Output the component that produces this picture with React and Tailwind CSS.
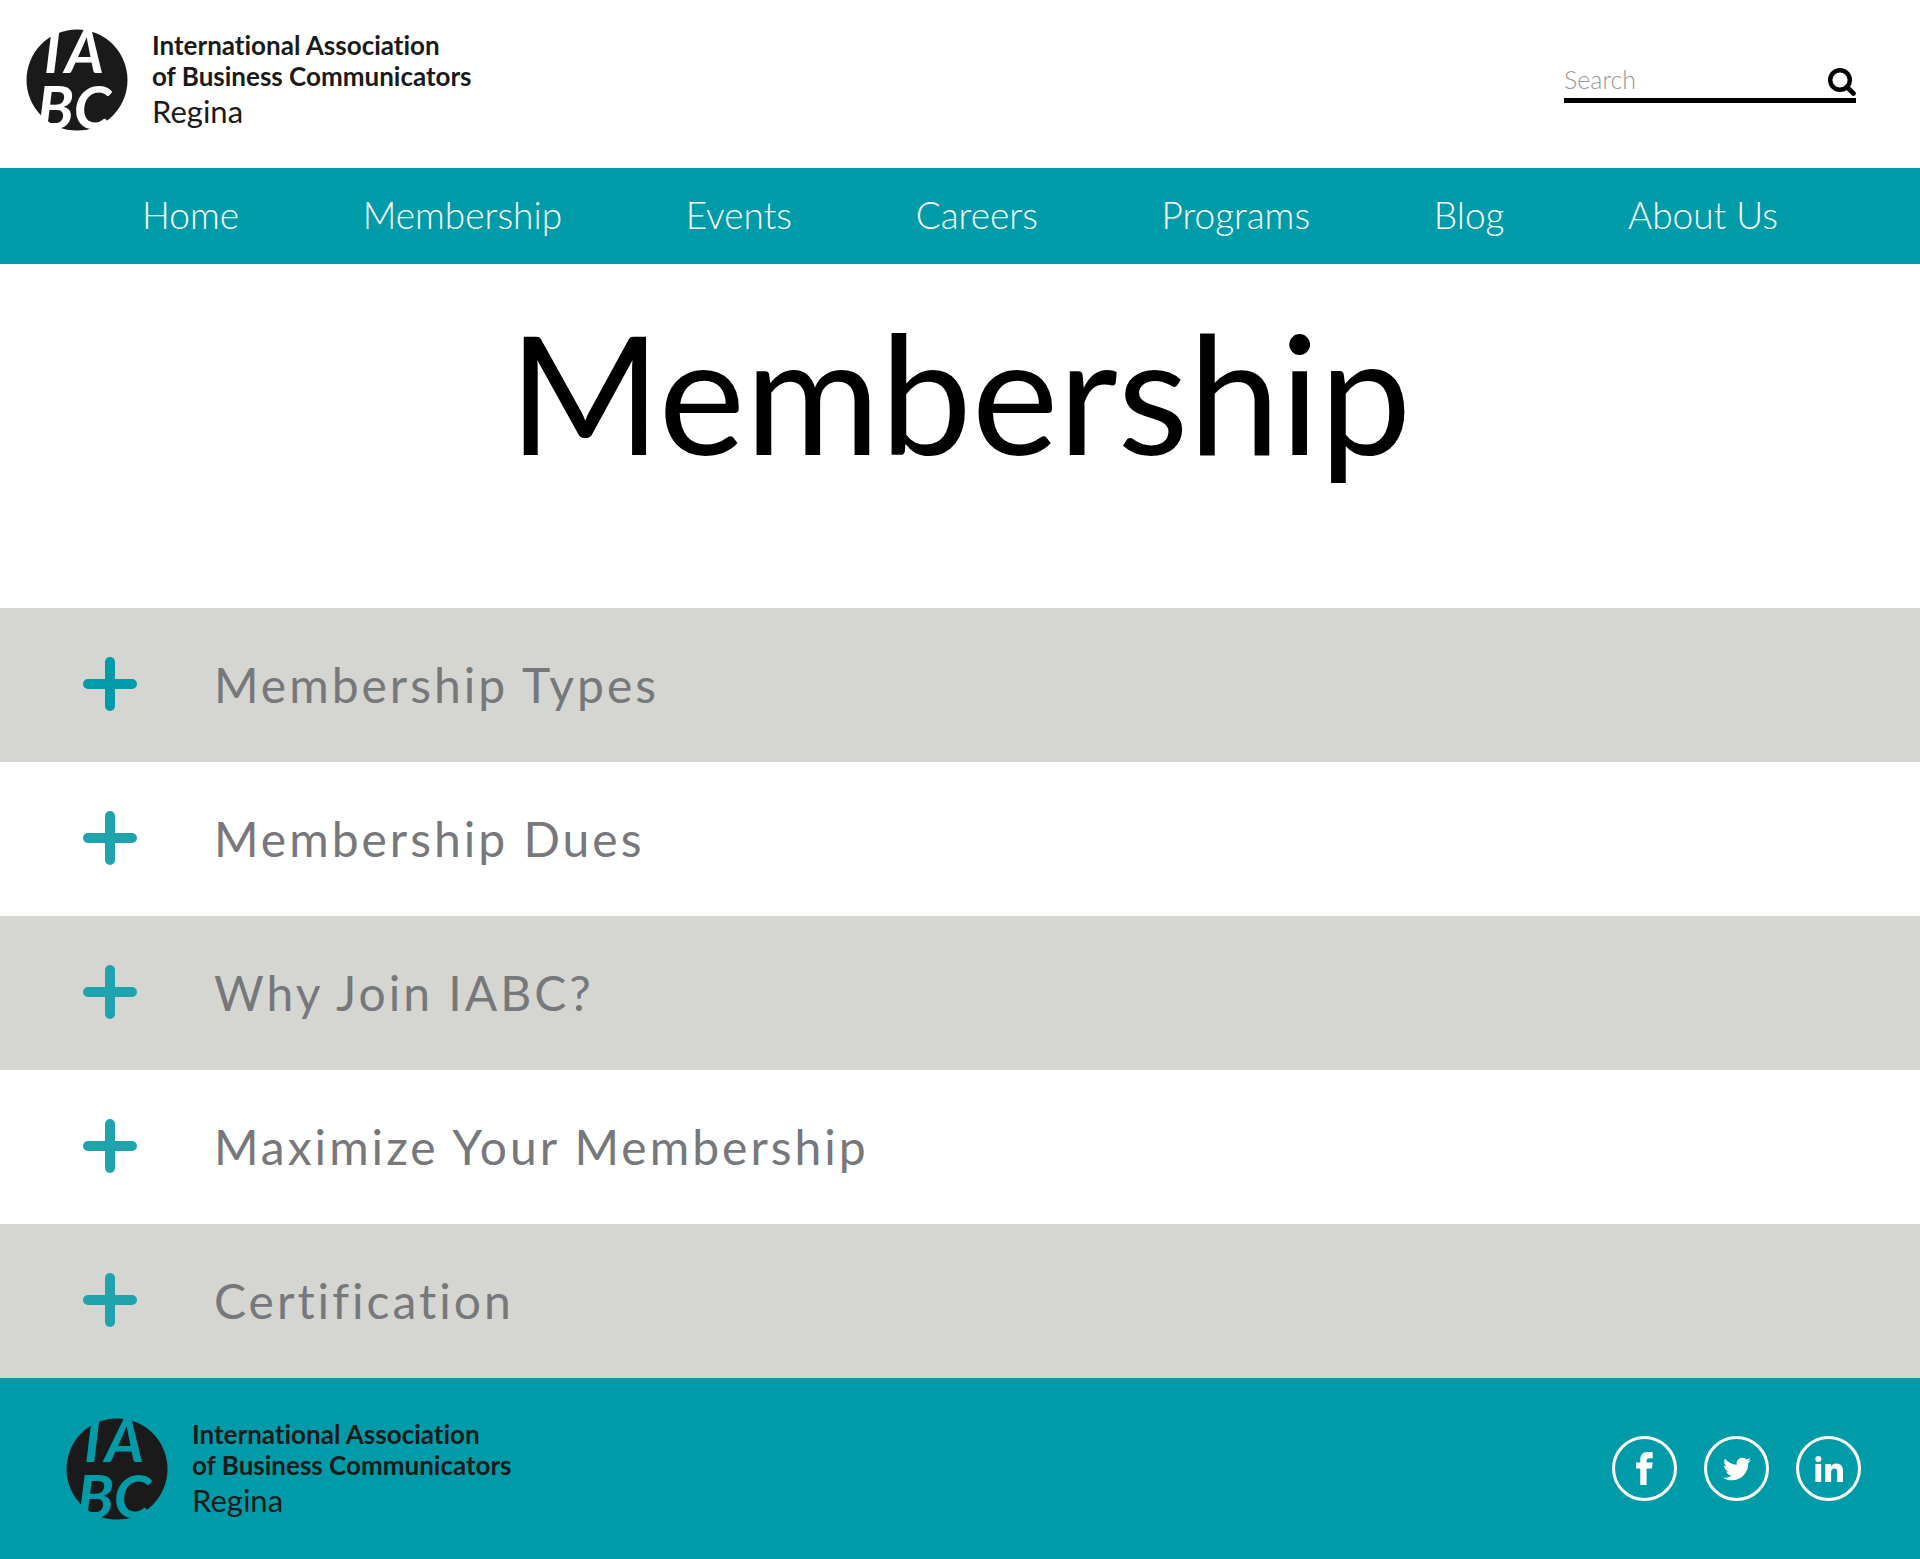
import { FaTwitter } from "react-icons/fa";

const navItems = ["Home", "Membership", "Events", "Careers", "Programs", "Blog", "About Us"];

const sections = [
  { title: "Membership Types", plus: "text-[#009ba8]" },
  { title: "Membership Dues", plus: "text-[#1fa3ac]" },
  { title: "Why Join IABC?", plus: "text-[#1fa3ac]" },
  { title: "Maximize Your Membership", plus: "text-[#1fa3ac]" },
  { title: "Certification", plus: "text-[#1fa3ac]" },
];

function Logo({ letterClass }) {
  return (
    <a href="#home" className="flex items-center gap-6 text-[#1a1a1a] [font-variant-ligatures:none]">
      <svg viewBox="0 0 102 102" className="size-[102px] shrink-0 overflow-visible" aria-label="IABC">
        <circle cx="51" cy="51" r="50.5" fill="#1a1a1a" />
        <g className={letterClass} fontFamily="Lato, sans-serif" fontWeight="700" fontStyle="italic" fontSize="60">
          <text x="18" y="44">
            I<tspan x="39">A</tspan>
          </text>
          <text x="11" y="100">BC</text>
        </g>
      </svg>
      <span className="flex flex-col whitespace-nowrap">
        <span className="text-[26px] leading-[31px] font-bold">International Association</span>
        <span className="text-[26px] leading-[31px] font-bold">of Business Communicators</span>
        <span className="text-[31px] leading-[38px]">Regina</span>
      </span>
    </a>
  );
}

function PlusIcon({ className }) {
  return (
    <svg viewBox="0 0 54 54" className={`mb-0.5 size-[54px] shrink-0 ${className}`} aria-hidden="true">
      <rect x="22" y="0" width="10" height="54" rx="5" fill="currentColor" />
      <rect x="0" y="22" width="54" height="10" rx="5" fill="currentColor" />
    </svg>
  );
}

function SocialLink({ label, children }) {
  return (
    <a
      href={`#${label.toLowerCase()}`}
      aria-label={label}
      className="flex size-[65px] items-center justify-center rounded-full border-3 border-white text-white"
    >
      {children}
    </a>
  );
}

export default function App() {
  return (
    <div className="bg-white font-['Lato',sans-serif]">
      <header className="flex h-42 items-center justify-between pr-16 pb-2 pl-[26px]">
        <Logo letterClass="fill-white" />
        <form role="search" className="mt-2 flex w-[292px] items-center border-b-5 border-black">
          <input
            type="search"
            aria-label="Search"
            placeholder="Search"
            className="h-8 min-w-0 flex-1 bg-transparent pb-1 text-[25px] font-light outline-none placeholder:text-[#999999]"
          />
          <button type="submit" aria-label="Submit search">
            <svg viewBox="0 0 28 28" className="size-7" fill="none" stroke="black" strokeLinecap="round">
              <circle cx="12" cy="12" r="9.8" strokeWidth="4.4" />
              <path d="M19 19L25.5 25.5" strokeWidth="4.6" />
            </svg>
          </button>
        </form>
      </header>

      <nav className="flex h-24 items-center justify-between bg-[#009ba8] px-[142px] pb-0.5 text-white">
        {navItems.map((item) => (
          <a key={item} href={`#${item.toLowerCase().replace(" ", "-")}`} className="text-[37px] font-light whitespace-nowrap">
            {item}
          </a>
        ))}
      </nav>

      <main>
        <h1 className="pt-[46px] pb-[134px] text-center text-[164px] leading-none text-black">Membership</h1>
        {sections.map(({ title, plus }) => (
          <section key={title} className="odd:bg-white even:bg-[#d5d6d1]">
            <button type="button" aria-expanded="false" className="flex h-[154px] w-full items-center gap-[77px] pl-[83px] text-left">
              <PlusIcon className={plus} />
              <span className="text-[48px] tracking-[3px] text-[#77787b]">{title}</span>
            </button>
          </section>
        ))}
      </main>

      <footer className="flex h-[181px] items-center justify-between bg-[#009ba8] pr-[59px] pl-[66px]">
        <Logo letterClass="fill-[#009ba8]" />
        <div className="flex gap-[27px]">
          <SocialLink label="Facebook">
            <svg viewBox="0 0 17 33" className="h-[33px] w-[17px]" fill="currentColor">
              <path d="M4.3 33V16.5H0V10.5H4.3V8C4.3 3 6.5 0 11.5 0H16.7V6.2H13.2C11.2 6.2 10.6 7 10.6 8.8V10.5H16.7L16 16.5H10.6V33Z" />
            </svg>
          </SocialLink>
          <SocialLink label="Twitter">
            <FaTwitter className="size-7" />
          </SocialLink>
          <SocialLink label="LinkedIn">
            <svg viewBox="0 0 28 26" className="h-[26px] w-7" fill="currentColor">
              <circle cx="3.3" cy="3" r="3" />
              <path d="M.4 8H6.2V26H.4ZM10.3 8H16V10.4C17 8.8 18.8 7.6 21.3 7.6C26.4 7.6 28 10.8 28 15.5V26H22.2V16.5C22.2 14.2 21.8 12.5 19.5 12.5C17 12.5 16.1 14.2 16.1 16.5V26H10.3Z" />
            </svg>
          </SocialLink>
        </div>
      </footer>
    </div>
  );
}
